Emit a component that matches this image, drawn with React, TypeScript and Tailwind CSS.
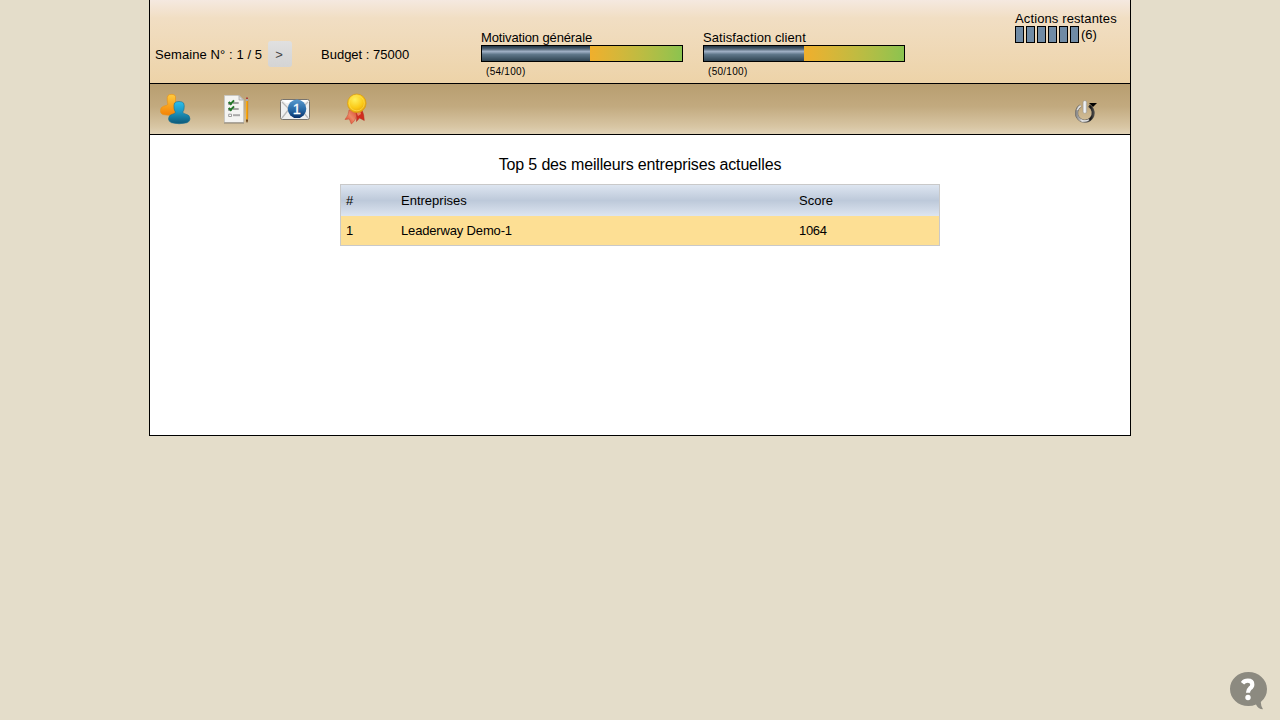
import React from "react";

function UsersIcon() {
  return (
    <svg width="32" height="32" viewBox="0 0 32 32">
      <defs>
        <linearGradient id="uo" x1="0" y1="0" x2="0" y2="1">
          <stop offset="0" stopColor="#ffcb3e" />
          <stop offset="1" stopColor="#f58205" />
        </linearGradient>
        <linearGradient id="ub" x1="0" y1="0" x2="0" y2="1">
          <stop offset="0" stopColor="#2cc0ee" />
          <stop offset=".5" stopColor="#1c93bd" />
          <stop offset="1" stopColor="#0e5877" />
        </linearGradient>
      </defs>
      <path d="M8 2.500Q9 1.300 12 1.300T15.500 3.500V21.500Q9 23 3 21.500Q.3 20.500.4 17.500Q.6 14.200 3.500 13.300Q7 12.500 7.900 11.300Q7.400 10 7.200 7Q7 4 8 2.500Z" fill="url(#uo)" stroke="#e7941c" strokeWidth=".7" />
      <path d="M14.500 10Q15.500 8.500 19 8.500T23.600 10Q24.600 12 24 16Q23.700 17.800 22.700 19Q23 20.700 26 21.200Q30 22 30 26Q29.800 28.700 27 29.700Q19 31.800 11.500 29.700Q8.600 28.700 8.500 26Q8.500 22 12.500 21.200Q15.300 20.700 15.500 19Q14.400 17.600 14.100 15.500Q13.600 12 14.500 10Z" fill="url(#ub)" stroke="#176e90" strokeWidth=".6" />
    </svg>
  );
}

function ChecklistIcon() {
  return (
    <svg width="32" height="32" viewBox="0 0 32 32">
      <path d="M4.500 2.500H19L23.500 7V29.500H4.500Z" fill="#f4f4f2" stroke="#c9c7c1" />
      <path d="M4 30H24" stroke="#8a8376" />
      <path d="M19 2.500V7H23.500Z" fill="#ddd" stroke="#a8a8a8" strokeWidth=".8" />
      <path d="M13 10H18.700M13 16H18.700" stroke="#a4a4a4" strokeWidth="2" />
      <path d="M13 22.200H20" stroke="#a9a9a9" strokeWidth="2" />
      <path d="M8.500 9.500H11.500V11.500H8.500ZM8.500 15.500H11.500V17.500H8.500ZM8.700 21.200H11.500V23.500H8.700Z" fill="white" stroke="#929292" strokeWidth=".9" />
      <path d="M8.700 9L10.700 11L14 7.300M8.700 15L10.700 17L14 13.300" fill="none" stroke="#24772b" strokeWidth="1.900" />
      <path d="M26 7H28V26L27 29L26 26Z" fill="#fbab10" />
      <path d="M27.700 7V26" stroke="#ce7b09" strokeWidth=".6" />
      <path d="M26 4.500H28V6H26Z" fill="#ad4039" />
      <path d="M26 6H28V8H26Z" fill="#a8aaae" />
      <path d="M26 26.500H28V28L27 30L26 28Z" fill="#6c4822" />
    </svg>
  );
}

function MailIcon() {
  return (
    <svg width="32" height="32" viewBox="0 0 32 32">
      <defs>
        <linearGradient id="mb" x1="0" y1="0" x2="0" y2="1">
          <stop offset="0" stopColor="#5999ce" />
          <stop offset=".55" stopColor="#2869a5" />
          <stop offset="1" stopColor="#062f6a" />
        </linearGradient>
      </defs>
      <rect x=".5" y="6.500" width="29" height="20" rx="2" fill="#f0f0f0" stroke="#77736d" />
      <path d="M2 9L9 16L2 25M28 9L21 16L28 25" fill="none" stroke="#bababa" strokeWidth="1.300" />
      <path d="M2 7H28L24 10H6Z" fill="#fff" />
      <circle cx="17" cy="15.800" r="9.300" fill="url(#mb)" />
      <text x="16.700" y="20.800" textAnchor="middle" fill="white" stroke="white" strokeWidth=".3" fontSize="14.500" fontFamily="Liberation Sans, Arial, sans-serif">1</text>
    </svg>
  );
}

function MedalIcon() {
  return (
    <svg width="32" height="32" viewBox="0 0 32 32">
      <defs>
        <radialGradient id="mg" cx=".4" cy=".3" r=".7">
          <stop offset="0" stopColor="#fff05d" />
          <stop offset=".65" stopColor="#fbc915" />
          <stop offset="1" stopColor="#e4a20e" />
        </radialGradient>
        <linearGradient id="mr" x1="0" y1="1" x2="1" y2="0">
          <stop offset="0" stopColor="#d93420" />
          <stop offset=".5" stopColor="#ec8a68" />
          <stop offset="1" stopColor="#d8422c" />
        </linearGradient>
      </defs>
      <path d="M9 17Q9 22 5 26.500L9.300 26L11.300 31Q16.500 27 17.500 19Z" fill="url(#mr)" stroke="#c94632" strokeWidth=".5" />
      <path d="M16 19Q17 22 16.500 28.500L19.500 25L24.300 27.500Q24 21 22 17Z" fill="#d02c1f" stroke="#b62c21" strokeWidth=".5" />
      <path d="M16.500 19.500L18 23L21 21L20 18Z" fill="#e98361" />
      <circle cx="16.800" cy="10.300" r="9.300" fill="url(#mg)" stroke="#d89d18" strokeWidth=".8" />
      <circle cx="16.800" cy="10.300" r="7.500" fill="none" stroke="#ffdf50" strokeWidth=".7" />
    </svg>
  );
}

function PowerIcon() {
  return (
    <svg width="24" height="24" viewBox="0 0 24 24">
      <defs>
        <linearGradient id="pw" x1="0" y1="0" x2="1" y2="0">
          <stop offset="0" stopColor="#8c8c8c" />
          <stop offset=".35" stopColor="#d5d5d5" />
          <stop offset=".6" stopColor="#777" />
          <stop offset=".85" stopColor="#141414" />
          <stop offset="1" stopColor="#444" />
        </linearGradient>
        <linearGradient id="pl">
          <stop offset="0" stopColor="#d6dade" />
          <stop offset=".5" stopColor="#f6f8fa" />
          <stop offset="1" stopColor="#c3c9d0" />
        </linearGradient>
      </defs>
      <path d="M6.700 5.700A8.300 8.300 0 1 0 15 5.700" fill="none" stroke="#625c53" strokeWidth="3" />
      <path d="M6.700 5.700A8.300 8.300 0 1 0 15 5.700" fill="none" stroke="url(#pw)" strokeWidth="2.300" />
      <path d="M3.300 10Q4.500 7 6.700 5.900M7 20Q11 22 15 19.800" fill="none" stroke="#e4e4e4" strokeWidth="1.200" />
      <rect x="9" y=".7" width="3.700" height="12.500" rx="1.500" fill="url(#pl)" stroke="#999288" strokeWidth=".5" />
      <path d="M15 3H23L19 7Z" fill="black" />
    </svg>
  );
}

function Gauge({ label, value, labelClass }: { label: string; value: number; labelClass: string }) {
  return (
    <div className="w-[202px]">
      <div className={`h-[15px] whitespace-nowrap leading-[15px] ${labelClass}`}>{label}</div>
      <div className="flex h-[17px] border border-black">
        <div
          className="h-full shrink-0 bg-[linear-gradient(#233746_0%,#526475_20%,#9fb0c5_36%,#8397ab_46%,#60788b_55%,#304553_100%)]"
          style={{ width: `${value * 2}px` }}
        />
        <div className="h-full flex-1 bg-linear-to-r from-[#f0af2c] to-[#8bc34f]" />
      </div>
      <div className="ml-[5px] mt-[4px] text-[10px] leading-[12px] tracking-[0.28px]">({value}/100)</div>
    </div>
  );
}

export default function App() {
  return (
    <div className="relative h-screen overflow-hidden bg-[#e4ddca] font-['Liberation_Sans',Arial,sans-serif] text-[13px] leading-[15px] text-black">
      <main className="mx-auto h-[436px] w-[982px] border-x border-b border-black bg-white">
        <header className="flex h-[84px] border-b border-black bg-[linear-gradient(#f5e9e0_0%,#f1dec3_22%,#edd3a8_100%)]">
          <div className="flex w-[171px] items-start pl-[5px] pt-[41px]">
            <span className="mt-[6px] w-[113px] whitespace-nowrap tracking-[0.08px]">Semaine N° : 1 / 5</span>
            <button className="h-[26px] w-[24px] rounded-[3px] bg-linear-to-b from-[#e0e0e0] to-[#d4d4d4] pr-[2px] text-[#444]">&gt;</button>
          </div>
          <div className="w-[160px] pt-[47px]">Budget : 75000</div>
          <div className="flex gap-5 pt-[30px]">
            <Gauge label="Motivation générale" value={54} labelClass="tracking-[-0.13px]" />
            <Gauge label="Satisfaction client" value={50} labelClass="tracking-[0.09px]" />
          </div>
          <div className="ml-[110px] pt-[11px]">
            <div className="tracking-[0.12px]">Actions restantes</div>
            <div className="flex h-[17px] gap-[2px]">
              {Array.from({ length: 6 }, (_, i) => (
                <span key={i} className="h-[17px] w-[9px] border border-black bg-[#708ba5]" />
              ))}
              <span className="pt-px">(6)</span>
            </div>
          </div>
        </header>
        <nav className="flex h-[51px] items-start justify-between border-b border-black bg-[linear-gradient(#b89e70_0%,#c2aa7f_45%,#d8c6a4_86%,#e1d3b8_100%)] pl-[10px] pr-[32px] pt-[9px]">
          <div className="flex gap-[28px]">
            <UsersIcon />
            <ChecklistIcon />
            <MailIcon />
            <MedalIcon />
          </div>
          <div className="pt-[7px]"><PowerIcon /></div>
        </nav>
        <section className="pt-[20px]">
          <h1 className="text-center text-[16px] leading-[19px] tracking-[-0.16px]">Top 5 des meilleurs entreprises actuelles</h1>
          <div className="mx-auto mt-[10px] w-[600px] border border-[#c9c9c9]">
            <div className="grid h-[31px] grid-cols-[55px_398px_1fr] items-center bg-[linear-gradient(#dde5f0,#bdc9da_50%,#dde5f0)] px-[5px]">
              <span>#</span><span>Entreprises</span><span>Score</span>
            </div>
            <div className="grid h-[29px] grid-cols-[55px_398px_1fr] items-center bg-[#fddf94] px-[5px]">
              <span>1</span><span className="tracking-[-0.16px]">Leaderway Demo-1</span><span className="tracking-[-0.3px]">1064</span>
            </div>
          </div>
        </section>
      </main>
      <button aria-label="Aide" className="absolute bottom-[10px] right-[13px]">
        <svg width="38" height="38" viewBox="0 0 38 38">
          <path d="M19.500 0C9 0 1 7.500 1 17S9 34 19.500 34Q23.500 34 27 32.500Q29 37 34 37.300Q31.800 34 31.800 30Q38 25 38 17C38 7.500 29.500 0 19.500 0Z" fill="#8c8a80" />
          <path d="M13.500 11.200Q15.500 8.700 18.800 8.700Q23.300 8.700 23.300 12.400Q23.300 14.700 21 16.300Q19 17.900 19 20.700" fill="none" stroke="white" strokeWidth="4.200" />
          <circle cx="19" cy="25.500" r="2.700" fill="white" />
        </svg>
      </button>
    </div>
  );
}
